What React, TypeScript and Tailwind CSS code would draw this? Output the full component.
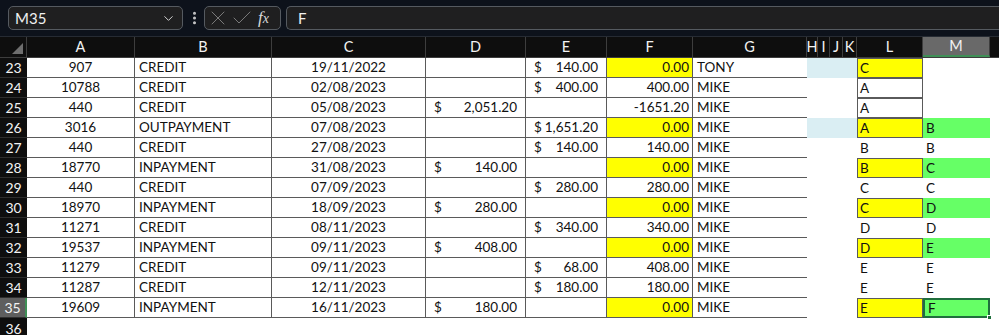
import { Check, ChevronDown, EllipsisVertical, X } from 'lucide-react';
import clsx from 'clsx';

type Col = { key: string; w: string };

const cols: Col[] = [
  { key: 'A', w: 'w-[108px]' },
  { key: 'B', w: 'w-[137px]' },
  { key: 'C', w: 'w-[154px]' },
  { key: 'D', w: 'w-[100px]' },
  { key: 'E', w: 'w-[81px]' },
  { key: 'F', w: 'w-[86px]' },
  { key: 'G', w: 'w-[114px]' },
  { key: 'H', w: 'w-[11px]' },
  { key: 'I', w: 'w-[12px]' },
  { key: 'J', w: 'w-[13px]' },
  { key: 'K', w: 'w-[14px]' },
  { key: 'L', w: 'w-[66px]' },
  { key: 'M', w: 'w-[67px]' },
];

type Row = {
  n: number;
  id: string;
  type: string;
  date: string;
  paid?: string;
  credit?: string;
  bal: string;
  name: string;
  yellow?: boolean;
  blue?: boolean;
  l: string;
  lBox?: boolean;
  lYellow?: boolean;
  m: string;
  mGreen?: boolean;
  selected?: boolean;
};

const rows: Row[] = [
  { n: 23, id: '907', type: 'CREDIT', date: '19/11/2022', credit: '140.00', bal: '0.00', name: 'TONY', yellow: true, blue: true, l: 'C', lBox: true, lYellow: true, m: '' },
  { n: 24, id: '10788', type: 'CREDIT', date: '02/08/2023', credit: '400.00', bal: '400.00', name: 'MIKE', l: 'A', lBox: true, m: '' },
  { n: 25, id: '440', type: 'CREDIT', date: '05/08/2023', paid: '2,051.20', bal: '-1651.20', name: 'MIKE', l: 'A', lBox: true, m: '' },
  { n: 26, id: '3016', type: 'OUTPAYMENT', date: '07/08/2023', credit: '1,651.20', bal: '0.00', name: 'MIKE', yellow: true, blue: true, l: 'A', lBox: true, lYellow: true, m: 'B', mGreen: true },
  { n: 27, id: '440', type: 'CREDIT', date: '27/08/2023', credit: '140.00', bal: '140.00', name: 'MIKE', l: 'B', m: 'B' },
  { n: 28, id: '18770', type: 'INPAYMENT', date: '31/08/2023', paid: '140.00', bal: '0.00', name: 'MIKE', yellow: true, l: 'B', lBox: true, lYellow: true, m: 'C', mGreen: true },
  { n: 29, id: '440', type: 'CREDIT', date: '07/09/2023', credit: '280.00', bal: '280.00', name: 'MIKE', l: 'C', m: 'C' },
  { n: 30, id: '18970', type: 'INPAYMENT', date: '18/09/2023', paid: '280.00', bal: '0.00', name: 'MIKE', yellow: true, l: 'C', lBox: true, lYellow: true, m: 'D', mGreen: true },
  { n: 31, id: '11271', type: 'CREDIT', date: '08/11/2023', credit: '340.00', bal: '340.00', name: 'MIKE', l: 'D', m: 'D' },
  { n: 32, id: '19537', type: 'INPAYMENT', date: '09/11/2023', paid: '408.00', bal: '0.00', name: 'MIKE', yellow: true, l: 'D', lBox: true, lYellow: true, m: 'E', mGreen: true },
  { n: 33, id: '11279', type: 'CREDIT', date: '09/11/2023', credit: '68.00', bal: '408.00', name: 'MIKE', l: 'E', m: 'E' },
  { n: 34, id: '11287', type: 'CREDIT', date: '12/11/2023', credit: '180.00', bal: '180.00', name: 'MIKE', l: 'E', m: 'E' },
  { n: 35, id: '19609', type: 'INPAYMENT', date: '16/11/2023', paid: '180.00', bal: '0.00', name: 'MIKE', yellow: true, l: 'E', lBox: true, lYellow: true, m: 'F', mGreen: true, selected: true },
];

const grid = 'border-r border-b border-[#5a5a5a]';

function Money({ value, w }: { value?: string; w: string }) {
  return (
    <div className={clsx(w, grid, 'flex h-full items-center justify-between pl-[8px] pr-[8px]')}>
      {value ? (
        <>
          <span>$</span>
          <span>{value}</span>
        </>
      ) : null}
    </div>
  );
}

function FormulaBar() {
  return (
    <div className="flex h-[37px] items-center border-b border-[#262b33] bg-[#0d121b] pl-[8px]">
      <div className="flex h-[24px] w-[175px] items-center justify-between rounded-[5px] border border-[#555a60] bg-[#1f1f20] pl-[6px] pr-[6px] text-[15px] text-[#f0f0f0]">
        <span>M35</span>
        <ChevronDown size={15} strokeWidth={1.6} className="text-[#d0d0d0]" />
      </div>
      <EllipsisVertical size={16} strokeWidth={2.5} className="ml-[2px] w-[19px] text-[#c8c8c8]" />
      <div className="flex h-[24px] w-[77px] items-center rounded-[5px] border border-[#555a60] bg-[#1f1f20] pl-[1px]">
        <X size={24} strokeWidth={1} className="text-[#7a7a7a]" />
        <Check size={24} strokeWidth={1} className="text-[#7a7a7a]" />
        <span className="ml-[4px] font-['Liberation_Serif',serif] text-[17px] italic text-[#d8d8d8]">
          f<span className="text-[14px]">x</span>
        </span>
      </div>
      <div className="ml-[5px] flex h-[24px] flex-1 items-center rounded-l-[5px] border border-r-0 border-[#555a60] bg-[#1f1f20] pl-[11px] text-[15px] text-[#f0f0f0]">
        F
      </div>
    </div>
  );
}

function HeaderRow() {
  return (
    <div className="flex h-[21px] border-b border-[#3d3d3d] bg-[#0e0e0e] text-[14.5px] text-[#f2f2f2]">
      <div className="relative w-[27px] border-r border-[#3d3d3d]">
        <div className="absolute right-[3px] bottom-[3px] h-0 w-0 border-t-[11px] border-l-[11px] border-t-transparent border-l-transparent border-b-0 border-r-[11px] border-r-[#6e6e6e]" />
      </div>
      {cols.map((c) => (
        <div
          key={c.key}
          className={clsx(
            c.w,
            'flex items-center justify-center border-r border-[#3d3d3d]',
            c.key === 'M' && 'border-b-2 border-b-[#3f8f56] bg-[#696969]',
          )}
        >
          {c.key}
        </div>
      ))}
      <div className="flex-1" />
    </div>
  );
}

function DataRow({ r }: { r: Row }) {
  return (
    <div className="flex h-[20px] text-[#111]">
      <div
        className={clsx(
          'flex w-[27px] items-center justify-center border-b border-[#2e2e2e] text-[14px] text-[#f2f2f2]',
          r.selected ? 'border-r-2 border-r-[#3f8f56] bg-[#5e5e5e]' : 'bg-[#0e0e0e]',
        )}
      >
        {r.n}
      </div>
      <div className={clsx('w-[108px]', grid, 'flex items-center justify-center bg-white')}>{r.id}</div>
      <div className={clsx('w-[137px]', grid, 'flex items-center bg-white pl-[4px]')}>{r.type}</div>
      <div className={clsx('w-[154px]', grid, 'flex items-center justify-center bg-white')}>{r.date}</div>
      <div className="bg-white">
        <Money value={r.paid} w="w-[100px]" />
      </div>
      <div className="bg-white">
        <Money value={r.credit} w="w-[81px]" />
      </div>
      <div
        className={clsx(
          'w-[86px]',
          grid,
          'flex items-center justify-end pr-[3px]',
          r.yellow ? 'bg-[#ffff00]' : 'bg-white',
        )}
      >
        {r.bal}
      </div>
      <div className="flex w-[114px] items-center border-b border-[#5a5a5a] bg-white pl-[4px]">{r.name}</div>
      <div className={clsx('w-[50px]', r.blue ? 'bg-[#daeef3]' : 'bg-white')} />
      <div
        className={clsx(
          'flex w-[66px] items-center pl-[3px]',
          r.lBox && 'shadow-[inset_0_0_0_1px_#5a5a5a]',
          r.lYellow ? 'bg-[#ffff00]' : 'bg-white',
        )}
      >
        {r.l}
      </div>
      <div
        className={clsx(
          'relative flex w-[67px] items-center pl-[3px]',
          r.mGreen ? 'bg-[#66ff66]' : 'bg-white',
          r.selected && 'border-2 border-[#1f6f3d] pl-[1px]',
        )}
      >
        {r.m}
        {r.selected && (
          <div className="absolute -right-[4px] -bottom-[4px] h-[5px] w-[5px] border border-white bg-[#1f6f3d]" />
        )}
      </div>
      <div className="flex-1 bg-white" />
    </div>
  );
}

export default function App() {
  return (
    <div className="h-[335px] w-[999px] overflow-hidden bg-white font-['Lato','Liberation_Sans',sans-serif] text-[13.5px]">
      <FormulaBar />
      <HeaderRow />
      {rows.map((r) => (
        <DataRow key={r.n} r={r} />
      ))}
      <div className="flex h-[20px]">
        <div className="flex w-[27px] items-center justify-center bg-[#0e0e0e] text-[14px] text-[#f2f2f2]">36</div>
        <div className="flex-1 bg-white" />
      </div>
    </div>
  );
}
